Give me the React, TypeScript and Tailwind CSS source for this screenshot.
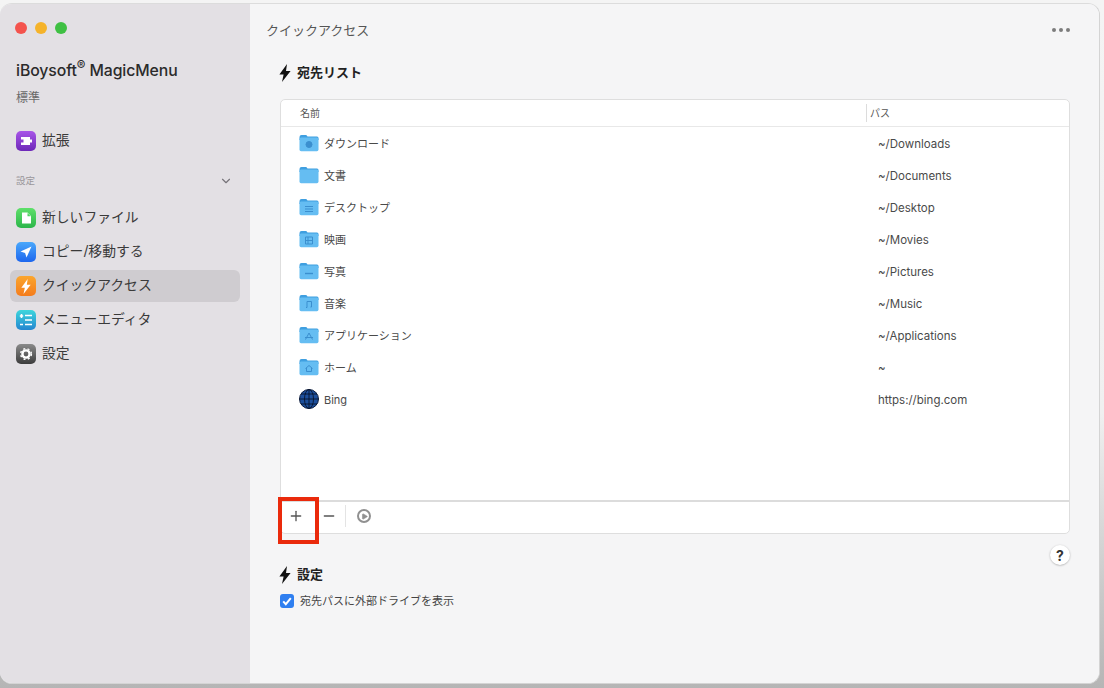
import { ReactNode } from 'react';
import { ChevronDown, Minus, Play, Plus } from 'lucide-react';

const font = { fontFamily: 'Inter, "Noto Sans CJK JP", sans-serif' };

function Bolt({ className }: { className: string }) {
  return (
    <svg viewBox="0 0 12 18" className={className} fill="currentColor">
      <path d="M8 0 L0.4 10.5 L4.6 10.5 L3 18 L11.6 7 L7 7 Z" />
    </svg>
  );
}

function Folder({ glyph }: { glyph: ReactNode }) {
  return (
    <svg viewBox="0 0 20 18" className="w-5 h-[18px] shrink-0">
      <path d="M0.5 3 Q0.5 1 2.5 1 L6.5 1 Q7.8 1 8.5 2.4 L18 2.4 Q19.5 2.4 19.5 4 L19.5 6 L0.5 6 Z" fill="#3f9fe0" />
      <rect x="0.5" y="3.6" width="19" height="13.6" rx="1.6" fill="#65bdf2" />
      <g stroke="#3b8fcf" strokeWidth="1" fill="none">{glyph}</g>
    </svg>
  );
}

const rows = [
  { name: 'ダウンロード', path: '~/Downloads', glyph: <circle cx="10" cy="10.5" r="3" fill="#3b8fcf" /> },
  { name: '文書', path: '~/Documents', glyph: null },
  { name: 'デスクトップ', path: '~/Desktop', glyph: <path d="M6 8.5h8M6 11h8M6 13.5h8" /> },
  { name: '映画', path: '~/Movies', glyph: <path d="M6.5 7h7v7h-7zM6.5 10.5h7M9 7v7" /> },
  { name: '写真', path: '~/Pictures', glyph: <path d="M6 11.5h8" strokeWidth="1.4" /> },
  { name: '音楽', path: '~/Music', glyph: <path d="M8 13.5V7.5h4.5v5.5M8 13.5h-1M12.5 13h-1" /> },
  { name: 'アプリケーション', path: '~/Applications', glyph: <path d="M10 7l-3.5 6.5M10 7l3.5 6.5M6 11.5h8" /> },
  { name: 'ホーム', path: '~', glyph: <path d="M6.5 10.5L10 7.5l3.5 3M7.5 10v3.5h5V10" /> },
];

function Globe() {
  return (
    <svg viewBox="0 0 20 20" className="w-5 h-5 shrink-0">
      <circle cx="10" cy="10" r="9.5" fill="#1c4f9c" stroke="#0a1a3a" />
      <g stroke="#08142e" strokeWidth="0.9" fill="none">
        <ellipse cx="10" cy="10" rx="4.5" ry="9.5" />
        <path d="M10 .5v19M.5 10h19M2 5h16M2 15h16" />
      </g>
    </svg>
  );
}

function Row({ icon, name, path }: { icon: ReactNode; name: string; path: string }) {
  return (
    <div className="h-8 flex items-center text-[11px] text-[#4a4a4a]">
      <div className="w-[585px] pl-[17px] flex items-center gap-[5px]">
        {icon}
        <span className="mt-[3px]">{name}</span>
      </div>
      <span className="pl-[11px] mt-[4px] text-[11.5px]">{path}</span>
    </div>
  );
}

function NavIcon({ className, children }: { className: string; children: ReactNode }) {
  return (
    <div className={`w-5 h-5 rounded-[5px] flex items-center justify-center shrink-0 ${className}`}>
      {children}
    </div>
  );
}

function NavItem({ icon, label, active }: { icon: ReactNode; label: string; active?: boolean }) {
  return (
    <div className={`mx-[10px] h-8 pl-[6px] flex items-center gap-[6px] rounded-md text-[13.8px] text-[#3a3a3a] ${active ? 'bg-[#cfccd0]' : ''}`}>
      {icon}
      <span className="-mt-[2px]">{label}</span>
    </div>
  );
}

export default function App() {
  return (
    <div className="w-[1104px] h-[688px] overflow-hidden bg-[linear-gradient(#f4f4f4,#f0f0f0_60%,#b5b5b5)] pt-[3px]" style={font}>
      <div className="relative w-[1100px] h-[681px] rounded-xl overflow-hidden flex border border-l-0 border-[#d4d4d4] border-t-[#dcdcdc] bg-[#f5f5f6]">
        <aside className="w-[250px] shrink-0 bg-[#e3e0e4] flex flex-col">
          <div className="pl-[15px] pt-[18px] flex gap-2">
            <span className="w-3 h-3 rounded-full bg-[#f4534d]" />
            <span className="w-3 h-3 rounded-full bg-[#f5b32a]" />
            <span className="w-3 h-3 rounded-full bg-[#3fc043]" />
          </div>
          <div className="pl-[16px] mt-[27px] text-[15.8px] leading-5 font-medium text-[#2b2b2b] tracking-[-0.1px]">
            iBoysoft<sup className="text-[13px]">®</sup> MagicMenu
          </div>
          <div className="pl-[16px] mt-[9px] text-[12px] leading-4 text-[#6a6a6a]">標準</div>
          <div className="mt-[19px]">
            <NavItem
              label="拡張"
              icon={
                <NavIcon className="bg-[linear-gradient(#a855e8,#6d28b8)]">
                  <svg viewBox="0 0 20 20" className="w-5 h-5" fill="#fff">
                    <path d="M5 6h9v2.5h2v3h-2V14H5v-2.5h2.5v-3H5z" />
                  </svg>
                </NavIcon>
              }
            />
          </div>
          <div className="mt-[16px] pl-[16px] pr-[17px] h-4 flex items-center justify-between text-[9.5px] text-[#9a979b]">
            <span>設定</span>
            <ChevronDown className="w-[14px] h-[14px] text-[#77747a]" strokeWidth={2} />
          </div>
          <div className="mt-[13px] flex flex-col gap-[2px]">
            <NavItem
              label="新しいファイル"
              icon={
                <NavIcon className="bg-[linear-gradient(#5fe06a,#2cb54a)]">
                  <svg viewBox="0 0 20 20" className="w-5 h-5" fill="#fff">
                    <path d="M6 4.5h5.5L15 8v7.5H6zM11.5 5v3.2h3.2" />
                  </svg>
                </NavIcon>
              }
            />
            <NavItem
              label="コピー/移動する"
              icon={
                <NavIcon className="bg-[linear-gradient(#4aa8fb,#1d66ee)]">
                  <svg viewBox="0 0 20 20" className="w-5 h-5" fill="#fff">
                    <path d="M15.5 4.5L4.5 9.5l4.6 1.4 1.4 4.6z" />
                  </svg>
                </NavIcon>
              }
            />
            <NavItem
              active
              label="クイックアクセス"
              icon={
                <NavIcon className="bg-[linear-gradient(#fba62e,#f47c1c)]">
                  <Bolt className="w-[10px] h-[15px] text-white" />
                </NavIcon>
              }
            />
            <NavItem
              label="メニューエディタ"
              icon={
                <NavIcon className="bg-[linear-gradient(#3dd6dc,#2486d0)]">
                  <svg viewBox="0 0 20 20" className="w-5 h-5" fill="none" stroke="#fff" strokeWidth="1.6">
                    <path d="M9 5.5h7M9 10h7M9 14.5h7M5.5 4v4M3.8 6h3.4M4 14.5h3" />
                  </svg>
                </NavIcon>
              }
            />
            <NavItem
              label="設定"
              icon={
                <NavIcon className="bg-[linear-gradient(#8a8a8a,#3c3c3c)]">
                  <svg viewBox="0 0 20 20" className="w-5 h-5">
                    <circle cx="10" cy="10" r="3.6" fill="none" stroke="#fff" strokeWidth="2.4" />
                    <circle cx="10" cy="10" r="5.4" fill="none" stroke="#fff" strokeWidth="1.4" strokeDasharray="2 2.4" />
                  </svg>
                </NavIcon>
              }
            />
          </div>
        </aside>

        <main className="flex-1 bg-[#f5f5f6] flex flex-col">
          <header className="h-[52px] pl-[16px] pr-[29px] flex items-center justify-between text-[13px] text-[#555]">
            <span className="mt-px">クイックアクセス</span>
            <div className="flex gap-[3px]">
              <span className="w-1 h-1 rounded-full bg-[#7c7c7c]" />
              <span className="w-1 h-1 rounded-full bg-[#7c7c7c]" />
              <span className="w-1 h-1 rounded-full bg-[#7c7c7c]" />
            </div>
          </header>

          <div className="pl-[29px] h-[34px] flex items-center gap-[6px] text-[13px] font-bold text-[#222]">
            <Bolt className="w-3 h-[18px] text-[#111]" />
            <span>宛先リスト</span>
          </div>

          <div className="mt-[9px] ml-[30px] w-[790px] h-[435px] bg-white border border-[#dedede] rounded-[5px] flex flex-col overflow-hidden">
            <div className="h-[27px] shrink-0 flex items-center border-b border-[#e8e8e8] text-[10px] text-[#555]">
              <span className="w-[585px] pl-[19px]">名前</span>
              <span className="h-[18px] border-l border-[#dcdcdc] pl-[3px] leading-[18px]">パス</span>
            </div>
            <div className="flex-1 pl-px">
              {rows.map((r) => (
                <Row key={r.path} name={r.name} path={r.path} icon={<Folder glyph={r.glyph} />} />
              ))}
              <Row name="Bing" path="https://bing.com" icon={<Globe />} />
            </div>
            <div className="h-[33px] shrink-0 border-t-2 border-[#dcdcdc] pl-px pb-[3px] flex items-center text-[#555]">
              <span className="w-[28px] flex justify-center">
                <Plus className="w-4 h-4" strokeWidth={2} />
              </span>
              <span className="ml-[11px] w-4 flex justify-center">
                <Minus className="w-4 h-4" strokeWidth={2} />
              </span>
              <span className="ml-[8px] h-[22px] border-l border-[#e4e4e4]" />
              <span className="ml-[11px] w-[14px] h-[14px] rounded-full border-2 border-[#909090] flex items-center justify-center">
                <Play className="w-[7px] h-[7px] text-[#909090] fill-[#909090]" />
              </span>
            </div>
          </div>

          <div className="mt-[11px] mr-[29px] self-end w-5 h-5 rounded-full bg-white shadow-[0_0.5px_2px_rgba(0,0,0,0.3)] flex items-center justify-center text-[14px] font-bold text-[#333]">
            ?
          </div>

          <div className="-mt-px pl-[29px] h-[22px] flex items-center gap-[6px] text-[13px] font-bold text-[#222]">
            <Bolt className="w-3 h-[18px] text-[#111]" />
            <span>設定</span>
          </div>
          <div className="mt-[7px] pl-[30px] flex items-center gap-[6px] text-[11px] text-[#444]">
            <span className="w-[14px] h-[14px] rounded-[3px] bg-[#2f7ff0] flex items-center justify-center">
              <svg viewBox="0 0 14 14" className="w-[14px] h-[14px]" fill="none" stroke="#fff" strokeWidth="2">
                <path d="M3.2 7.4l2.6 2.8 5-6" />
              </svg>
            </span>
            <span>宛先パスに外部ドライブを表示</span>
          </div>
        </main>

        <div className="absolute left-[278px] top-[493px] w-[41px] h-[47px] border-[4px] border-[#ea2a0c]" />
      </div>
    </div>
  );
}
